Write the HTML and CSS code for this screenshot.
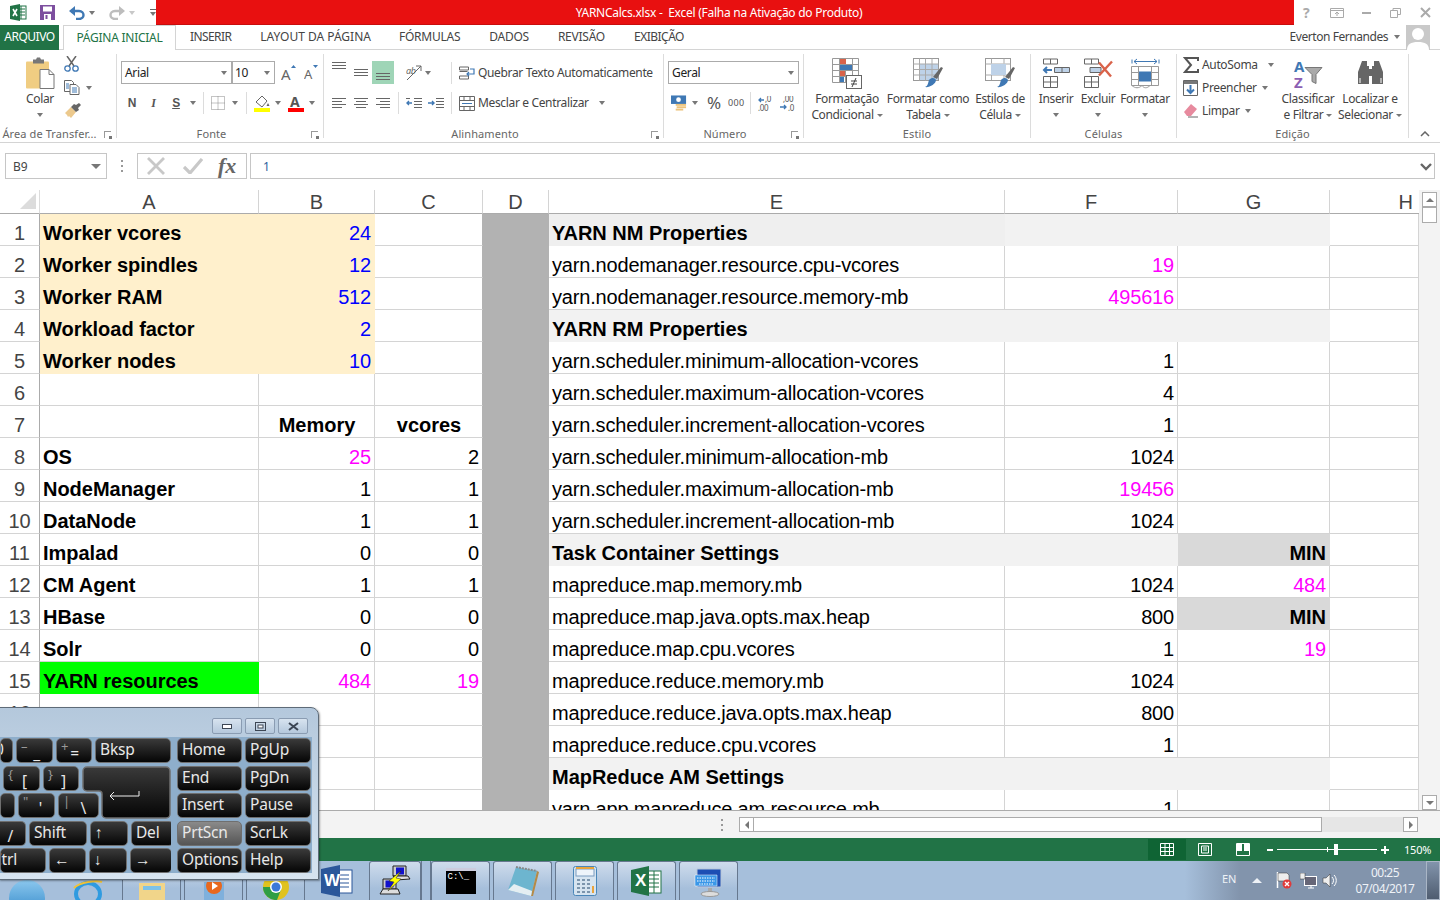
FILE: index.html
```html
<!DOCTYPE html>
<html lang="pt-BR">
<head>
<meta charset="utf-8">
<title>YARNCalcs.xlsx - Excel</title>
<link rel="stylesheet" href="styles.css">
</head>
<body>
<div class="app">
  <header class="titlebar">
    <div class="qat">
      <svg class="q-logo" width="17" height="17" viewBox="0 0 17 17"><rect x="6" y="2" width="10" height="13" fill="#fff" stroke="#217346"/><path d="M8 5h7M8 8h7M8 11h7M11 2v13" stroke="#217346"/><path d="M0 2l10-2v17L0 15z" fill="#217346"/><path d="M3 5l4 7M7 5l-4 7" stroke="#fff" stroke-width="1.6"/></svg>
      <svg class="q-save" width="15" height="15" viewBox="0 0 15 15"><path d="M0 0h15v15H0z" fill="#7d4f9f"/><rect x="3" y="1.5" width="9" height="5" fill="#fff"/><rect x="4" y="9" width="7" height="6" fill="#fff"/><rect x="5.5" y="10" width="2" height="4" fill="#7d4f9f"/></svg>
      <svg class="q-undo" width="16" height="14" viewBox="0 0 16 14"><path d="M2 5h8c3 0 4.500 2 4.500 4s-1.500 4-4.500 4H7" fill="none" stroke="#3f78b4" stroke-width="2.400"/><path d="M6 0v10L0 5z" fill="#3f78b4"/></svg>
      <i class="tri q-t1"></i>
      <svg class="q-redo" width="16" height="14" viewBox="0 0 16 14"><path d="M14 5H6C3 5 1.500 7 1.500 9S3 13 6 13h3" fill="none" stroke="#bdbdbd" stroke-width="2.400"/><path d="M10 0v10l6-5z" fill="#bdbdbd"/></svg>
      <i class="tri tri-light q-t2"></i>
      <span class="q-more"><b></b><i class="tri"></i></span>
    </div>
    <div class="redbar">YARNCalcs.xlsx -&nbsp; Excel (Falha na Ativação do Produto)</div>
    <div class="winctl">
      <span class="w-help">?</span>
      <svg width="14" height="10" viewBox="0 0 14 10"><path d="M.5.500h13v9H.5zM.5 2.500h13" fill="none" stroke="#aaa"/><path d="M7 8V4M5 6l2-2 2 2" fill="none" stroke="#aaa"/></svg>
      <svg width="9" height="3" viewBox="0 0 9 3"><rect width="9" height="2" y="1" fill="#aaa"/></svg>
      <svg width="11" height="10" viewBox="0 0 11 10"><path d="M.5 2.500h7v7h-7zM3 2.500V.5h7.500v6H8" fill="none" stroke="#aaa"/></svg>
      <svg width="11" height="11" viewBox="0 0 11 11"><path d="M1 1l9 9M10 1l-9 9" stroke="#aaa" stroke-width="2"/></svg>
    </div>
  </header>

  <nav class="tabs">
    <span class="tab-file">ARQUIVO</span>
    <span class="tab-home">PÁGINA INICIAL</span>
    <span class="tab t-ins">INSERIR</span>
    <span class="tab t-lay">LAYOUT DA PÁGINA</span>
    <span class="tab">FÓRMULAS</span>
    <span class="tab">DADOS</span>
    <span class="tab">REVISÃO</span>
    <span class="tab t-exi">EXIBIÇÃO</span>
    <span class="user">Everton Fernandes</span>
    <i class="tri user-tri"></i>
    <svg class="avatar" width="24" height="25" viewBox="0 0 24 25"><rect width="24" height="25" fill="#c9c9c9"/><circle cx="12" cy="9" r="6" fill="#fff"/><path d="M1 25c0-6 4-8 11-8s11 2 11 8z" fill="#fff"/></svg>
  </nav>

  <section class="ribbon">
    <div class="group g-clip">
      <div class="body">
        <div class="big w40">
          <svg class="ico" width="30" height="32" viewBox="0 0 30 32"><rect x="1" y="4" width="23" height="27" rx="1" fill="#f0cd82"/><path d="M8 4V2h3l1-2h3l1 2h3v4H8z" fill="#777"/><path d="M15 12h9l5 5v14H15z" fill="#fff" stroke="#777"/><path d="M24 12v5h5" fill="none" stroke="#777"/></svg>
          <span>Colar</span>
          <i class="tri tri-line"></i>
        </div>
        <div class="smalls">
          <svg width="16" height="16" viewBox="0 0 16 16"><path d="M3 0l7 10M12 0L5 10" stroke="#666" stroke-width="1.500"/><circle cx="3.500" cy="12.500" r="2.700" fill="none" stroke="#3f78b4" stroke-width="1.300"/><circle cx="11.500" cy="12.500" r="2.700" fill="none" stroke="#3f78b4" stroke-width="1.300"/></svg>
          <span class="sm-row"><svg width="16" height="15" viewBox="0 0 16 15"><path d="M.5.500h7l2 2v9H.5z" fill="#fff" stroke="#666"/><path d="M6 4.500h6l3 3v7H6z" fill="#fff" stroke="#666"/><path d="M2 4h3M2 6h3M2 8h3M8 8h5M8 10h5M8 12h5" stroke="#3f78b4"/></svg><i class="tri ml6"></i></span>
          <svg width="17" height="16" viewBox="0 0 17 16"><path d="M1 10l6-6 5 5-5 6-2-2-1 1-1-2z" fill="#ecc98d"/><path d="M7 4l3-3 2 1 3-2 2 2-3 3 1 2-3 2z" fill="#666"/></svg>
        </div>
      </div>
      <div class="label lbl-launch">Área de Transfer...<i class="launch"></i></div>
    </div>

    <div class="group g-font">
      <div class="body col">
        <div class="r1">
          <span class="sel w111">Arial<i class="tri"></i></span>
          <span class="sel w43 nol">10<i class="tri"></i></span>
          <svg class="ml6" width="15" height="16" viewBox="0 0 15 16"><text x="0" y="15" class="svg-a a-big">A</text><path d="M10 3l2.500-3L15 3z" fill="#3f78b4"/></svg>
          <svg class="ml8" width="14" height="15" viewBox="0 0 14 15"><text x="0" y="14" class="svg-a a-sm">A</text><path d="M9 0h5l-2.500 3z" fill="#3f78b4"/></svg>
        </div>
        <div class="r2">
          <span class="it w22 b-ico">N</span>
          <span class="it w21 i-ico">I</span>
          <span class="it w24 s-ico">S</span>
          <span class="it w9"><i class="tri"></i></span>
          <i class="sep m6-6"></i>
          <span class="it w16"><svg width="14" height="14" viewBox="0 0 14 14"><path d="M.5.500h13v13H.5zM7 .5v13M.5 7h13" fill="none" stroke="#888" stroke-dasharray="1 1"/></svg></span>
          <span class="it w18"><i class="tri"></i></span>
          <i class="sep m2-7"></i>
          <span class="it w16"><svg width="16" height="17" viewBox="0 0 16 17"><path d="M2 7l6-6 5 5-5 6z" fill="#fff" stroke="#666"/><path d="M14 8l1.500 3h-3z" fill="#666"/><rect y="13" width="16" height="4" fill="#ffff00"/></svg></span>
          <span class="it w16"><i class="tri"></i></span>
          <span class="it w20"><svg width="16" height="17" viewBox="0 0 16 17"><text x="2" y="12" class="svg-a a-col">A</text><rect y="13" width="16" height="4" fill="#ff0000"/></svg></span>
          <span class="it w12"><i class="tri"></i></span>
        </div>
      </div>
      <div class="label lbl-launch">Fonte<i class="launch"></i></div>
    </div>

    <div class="group g-align">
      <div class="body col">
        <div class="r1">
          <span class="it w14 mr8"><svg class="at-t" width="14" height="7" viewBox="0 0 14 7"><path d="M0 .5h14M0 3.500h14M0 6.500h14" stroke="#666"/></svg></span>
          <span class="it w14"><svg width="14" height="7" viewBox="0 0 14 7"><path d="M0 .5h14M0 3.500h14M0 6.500h14" stroke="#666"/></svg></span>
          <span class="it w22 on ml4"><svg width="14" height="7" viewBox="0 0 14 7"><path d="M0 .5h14M0 3.500h14M0 6.500h14" stroke="#666"/></svg></span>
          <span class="it w16 ml12"><svg width="16" height="16" viewBox="0 0 16 16"><path d="M1 15L15 1M10 1h5v5" fill="none" stroke="#666"/><text x="0" y="9" class="svg-ab">ab</text></svg></span>
          <span class="it w12"><i class="tri"></i></span>
          <i class="sep m17-7"></i>
          <svg width="16" height="14" viewBox="0 0 16 14"><path d="M.5 1h9v3h-9zM.5 10h9v3h-9z" fill="none" stroke="#666"/><path d="M.5 5.500h8" stroke="#666"/><path d="M11 3h4v5H8M10 6L8 8l2 2" fill="none" stroke="#3f78b4" stroke-width="1.200"/></svg>
          <span class="txt ml3">Quebrar Texto Automaticamente</span>
        </div>
        <div class="r2">
          <span class="it w14 mr8"><svg width="14" height="10" viewBox="0 0 14 10"><path d="M0 .5h14M0 3.500h10M0 6.500h14M0 9.500h10" stroke="#666"/></svg></span>
          <span class="it w14 mr8"><svg width="14" height="10" viewBox="0 0 14 10"><path d="M0 .5h14M2 3.500h10M0 6.500h14M2 9.500h10" stroke="#666"/></svg></span>
          <span class="it w14"><svg width="14" height="10" viewBox="0 0 14 10"><path d="M0 .5h14M4 3.500h10M0 6.500h14M4 9.500h10" stroke="#666"/></svg></span>
          <i class="sep m8-7"></i>
          <span class="it w16 mr6"><svg width="16" height="10" viewBox="0 0 16 10"><path d="M8 .5h8M8 3.500h8M8 6.500h8M8 9.500h8M0 .5h4" stroke="#666"/><path d="M6 5H1M3 3L1 5l2 2" fill="none" stroke="#3f78b4" stroke-width="1.400"/></svg></span>
          <span class="it w16"><svg width="16" height="10" viewBox="0 0 16 10"><path d="M8 .5h8M8 3.500h8M8 6.500h8M8 9.500h8" stroke="#666"/><path d="M0 5h6M4 3l2 2-2 2" fill="none" stroke="#3f78b4" stroke-width="1.400"/></svg></span>
          <i class="sep m7-7"></i>
          <svg width="16" height="15" viewBox="0 0 16 15"><path d="M.5.500h15v14H.5zM.5 4.500h15M.5 10.500h15M5 .5v4M5 10.500v4M11 .5v4M11 10.500v4" fill="none" stroke="#666"/><path d="M3 7.500h10" stroke="#3f78b4"/></svg>
          <span class="txt ml3">Mesclar e Centralizar</span>
          <i class="tri ml10"></i>
        </div>
      </div>
      <div class="label lbl-launch">Alinhamento<i class="launch"></i></div>
    </div>

    <div class="group g-num">
      <div class="body col">
        <div class="r1"><span class="sel w131">Geral<i class="tri"></i></span></div>
        <div class="r2">
          <span class="it w16 ml3"><svg width="17" height="16" viewBox="0 0 17 16"><rect y="0" width="16" height="9" fill="#3f78b4"/><circle cx="8" cy="4.500" r="2.500" fill="#fff"/><rect x="5" y="9" width="11" height="2" fill="#edc47c"/><rect x="6" y="11.500" width="10" height="2" fill="#edc47c"/><rect x="5" y="14" width="8" height="2" fill="#edc47c"/></svg></span>
          <span class="it w16"><i class="tri"></i></span>
          <span class="pct">%</span>
          <span class="th">000</span>
          <i class="sep m7-7"></i>
          <svg width="15" height="15" viewBox="0 0 15 15"><text x="7" y="6" class="svg-dec">,0</text><text x="0" y="15" class="svg-dec">,00</text><path d="M6 4H1M3 2L1 4l2 2" fill="none" stroke="#3f78b4" stroke-width="1.300"/></svg>
          <svg class="ml7" width="15" height="15" viewBox="0 0 15 15"><text x="3" y="6" class="svg-dec">,00</text><text x="8" y="15" class="svg-dec">,0</text><path d="M0 11h6M4 9l2 2-2 2" fill="none" stroke="#3f78b4" stroke-width="1.300"/></svg>
        </div>
      </div>
      <div class="label lbl-launch">Número<i class="launch"></i></div>
    </div>

    <div class="group g-style">
      <div class="body">
        <div class="big w80">
          <svg class="ico" width="30" height="31" viewBox="0 0 30 31"><path d="M.5.500h26v24H.5zM.5 6.500h26M.5 12.500h26M.5 18.500h26M7.500.5v24M13.500.5v24M20.500.5v24" fill="none" stroke="#999"/><rect x="8" y="1" width="6" height="5" fill="#d9634a"/><rect x="8" y="7" width="12" height="5" fill="#3f78b4"/><rect x="8" y="13" width="5" height="5" fill="#d9634a"/><rect x="8" y="19" width="4" height="5" fill="#3f78b4"/><rect x="14.500" y="17.500" width="15" height="13" fill="#fff" stroke="#666"/><path d="M19 23h6M19 26h6M24 20l-4 9" stroke="#444"/></svg>
          <span>Formatação</span><span class="dd">Condicional<i class="tri"></i></span>
        </div>
        <div class="big w82">
          <svg class="ico" width="30" height="31" viewBox="0 0 30 31"><rect x=".5" y=".5" width="25" height="22" fill="#fff" stroke="#999"/><rect x="6" y="6" width="19" height="16" fill="#bed2e8"/><path d="M.5 6h25M.5 11.500h25M.5 17h25M6.500.5v22M12.500.5v22M19 .5v22" fill="none" stroke="#aaa"/><path d="M20 19l8-10 2 1-6 11z" fill="#666"/><path d="M16 22c3-3 6-2 7 0 0 4-7 8-11 7 3-1 3-4 4-7z" fill="#3f78b4"/></svg>
          <span>Formatar como</span><span class="dd">Tabela<i class="tri"></i></span>
        </div>
        <div class="big w62">
          <svg class="ico" width="30" height="31" viewBox="0 0 30 31"><rect x=".5" y=".5" width="25" height="22" fill="#fff" stroke="#999"/><path d="M.5 6h25M.5 17h25M6.500 .5v5M6.500 17v5M19 .5v5M19 17v5" stroke="#aaa"/><rect x="6" y="6" width="15" height="11" fill="#bed2e8"/><path d="M20 19l8-10 2 1-6 11z" fill="#666"/><path d="M16 22c3-3 6-2 7 0 0 4-7 8-11 7 3-1 3-4 4-7z" fill="#3f78b4"/></svg>
          <span>Estilos de</span><span class="dd">Célula<i class="tri"></i></span>
        </div>
      </div>
      <div class="label">Estilo</div>
    </div>

    <div class="group g-cell">
      <div class="body">
        <div class="big w42">
          <svg class="ico" width="28" height="30" viewBox="0 0 28 30"><path d="M1.500.5h14v5h-14zM8.500 .5v5M1.500 18h14v11h-14zM1.500 23.500h14M8.500 18v11" fill="none" stroke="#666"/><path d="M12.500 9h15v5h-15zM20 9v5" fill="#bed2e8" stroke="#666"/><path d="M10 11.500H2M5 8.500l-3 3 3 3" fill="none" stroke="#3f78b4" stroke-width="2"/></svg>
          <span>Inserir</span><i class="tri tri-line"></i>
        </div>
        <div class="big w42">
          <svg class="ico" width="30" height="30" viewBox="0 0 30 30"><path d="M1.500.5h14v5h-14zM8.500 .5v5M1.500 18h14v11h-14zM1.500 23.500h14M8.500 18v11" fill="none" stroke="#666"/><path d="M7 9h11v5H7z" fill="#bed2e8" stroke="#666"/><path d="M16 4l12 14M29 3L16 17" stroke="#d9634a" stroke-width="2.400"/></svg>
          <span>Excluir</span><i class="tri tri-line"></i>
        </div>
        <div class="big w52">
          <svg class="ico" width="29" height="30" viewBox="0 0 29 30"><path d="M1 1v4M28 1v4" stroke="#3f78b4"/><path d="M3 3h23M6 .5L3 3l3 2.500M23 .5L26 3l-3 2.500" fill="none" stroke="#3f78b4"/><path d="M.5 8h27v19H.5zM.5 14h27M.5 21h27M7.500 8v19M20.500 8v19" fill="none" stroke="#999"/><rect x="8" y="13" width="12" height="10" fill="#3f78b4"/><path d="M1 27c3 3 7 3 10 0M11 27c2 3 5 3 8 0" fill="none" stroke="#999"/></svg>
          <span>Formatar</span><i class="tri tri-line"></i>
        </div>
      </div>
      <div class="label">Células</div>
    </div>

    <div class="group g-edit">
      <div class="body">
        <div class="edit-col">
          <div class="edit-row"><svg width="16" height="16" viewBox="0 0 16 16"><path d="M15 4V1H2l6 7-6 7h13v-3" fill="none" stroke="#555" stroke-width="2"/></svg><span class="txt ml3">AutoSoma</span><i class="tri ml10"></i></div>
          <div class="edit-row"><svg width="15" height="16" viewBox="0 0 15 16"><path d="M.5.500h14v15H.5z" fill="#fff" stroke="#666"/><rect x="1" y="1" width="13" height="3" fill="#777"/><path d="M7.500 5v8M4 9.500l3.500 3.500L11 9.500" fill="none" stroke="#3f78b4" stroke-width="2"/></svg><span class="txt ml4">Preencher</span><i class="tri ml5"></i></div>
          <div class="edit-row"><svg width="15" height="14" viewBox="0 0 15 14"><path d="M1 8l7-8 6 5-6 7H4z" fill="#e78a9e"/><path d="M5 13h10" stroke="#666"/></svg><span class="txt ml4">Limpar</span><i class="tri ml5"></i></div>
        </div>
        <div class="big w60">
          <svg class="ico" width="30" height="30" viewBox="0 0 30 30"><text x="1" y="13" class="svg-sort sort-a">A</text><text x="1" y="29" class="svg-sort sort-z">Z</text><path d="M12 9h17l-6 7v9l-4-2v-7z" fill="#aaa" stroke="#777"/></svg>
          <span>Classificar</span><span class="dd">e Filtrar<i class="tri"></i></span>
        </div>
        <div class="big w64">
          <svg class="ico" width="27" height="27" viewBox="0 0 27 27"><path d="M5 1h5v5h2v18H1V12zM22 1h-5v5h-2v18h11V12z" fill="#666"/><rect x="12" y="9" width="3" height="7" fill="#666"/><path d="M3 18v5M24 18v5" stroke="#fff"/></svg>
          <span>Localizar e</span><span class="dd">Selecionar<i class="tri"></i></span>
        </div>
      </div>
      <div class="label">Edição</div>
    </div>

    <svg class="collapse" width="10" height="6" viewBox="0 0 10 6"><path d="M1 5l4-4 4 4" fill="none" stroke="#666" stroke-width="1.500"/></svg>
  </section>

  <div class="fbar">
    <span class="namebox">B9<i class="tri tri-big"></i></span>
    <span class="fdots"><b></b><b></b><b></b></span>
    <span class="fxbox">
      <svg width="18" height="18" viewBox="0 0 18 18"><path d="M1 1l16 16M17 1L1 17" stroke="#c8c8c8" stroke-width="2.800"/></svg>
      <svg class="ml18" width="20" height="16" viewBox="0 0 20 16"><path d="M1 9l6 6L19 1" fill="none" stroke="#c8c8c8" stroke-width="3.200"/></svg>
      <span class="fx">fx</span>
    </span>
    <span class="finput">1<svg class="fchev" width="12" height="8" viewBox="0 0 12 8"><path d="M1 1l5 5 5-5" fill="none" stroke="#666" stroke-width="2.400"/></svg></span>
  </div>

  <main class="sheetwrap">
    <div class="sheet">
      <div class="corner"><i></i></div><div class="ch">A</div><div class="ch">B</div><div class="ch">C</div><div class="ch">D</div><div class="ch">E</div><div class="ch">F</div><div class="ch">G</div><div class="ch ch-h">H</div>

      <div class="rh">1</div><div class="c b y ny">Worker vcores</div><div class="c r u y">24</div><div class="c"></div><div class="c d"></div><div class="c b g1">YARN NM Properties</div><div class="c g"></div><div class="c g"></div><div class="c"></div>
      <div class="rh">2</div><div class="c b y ny">Worker spindles</div><div class="c r u y">12</div><div class="c"></div><div class="c d"></div><div class="c">yarn.nodemanager.resource.cpu-vcores</div><div class="c r m">19</div><div class="c"></div><div class="c"></div>
      <div class="rh">3</div><div class="c b y ny">Worker RAM</div><div class="c r u y">512</div><div class="c"></div><div class="c d"></div><div class="c">yarn.nodemanager.resource.memory-mb</div><div class="c r m">495616</div><div class="c"></div><div class="c"></div>
      <div class="rh">4</div><div class="c b y ny">Workload factor</div><div class="c r u y">2</div><div class="c"></div><div class="c d"></div><div class="c b g">YARN RM Properties</div><div class="c g"></div><div class="c g"></div><div class="c"></div>
      <div class="rh">5</div><div class="c b y ny">Worker nodes</div><div class="c r u y">10</div><div class="c"></div><div class="c d"></div><div class="c">yarn.scheduler.minimum-allocation-vcores</div><div class="c r">1</div><div class="c"></div><div class="c"></div>
      <div class="rh">6</div><div class="c"></div><div class="c"></div><div class="c"></div><div class="c d"></div><div class="c">yarn.scheduler.maximum-allocation-vcores</div><div class="c r">4</div><div class="c"></div><div class="c"></div>
      <div class="rh">7</div><div class="c"></div><div class="c b mid">Memory</div><div class="c b mid">vcores</div><div class="c d"></div><div class="c">yarn.scheduler.increment-allocation-vcores</div><div class="c r">1</div><div class="c"></div><div class="c"></div>
      <div class="rh">8</div><div class="c b">OS</div><div class="c r m">25</div><div class="c r">2</div><div class="c d"></div><div class="c">yarn.scheduler.minimum-allocation-mb</div><div class="c r">1024</div><div class="c"></div><div class="c"></div>
      <div class="rh">9</div><div class="c b">NodeManager</div><div class="c r">1</div><div class="c r">1</div><div class="c d"></div><div class="c">yarn.scheduler.maximum-allocation-mb</div><div class="c r m">19456</div><div class="c"></div><div class="c"></div>
      <div class="rh">10</div><div class="c b">DataNode</div><div class="c r">1</div><div class="c r">1</div><div class="c d"></div><div class="c">yarn.scheduler.increment-allocation-mb</div><div class="c r">1024</div><div class="c"></div><div class="c"></div>
      <div class="rh">11</div><div class="c b">Impalad</div><div class="c r">0</div><div class="c r">0</div><div class="c d"></div><div class="c b g">Task Container Settings</div><div class="c g"></div><div class="c r b s">MIN</div><div class="c"></div>
      <div class="rh">12</div><div class="c b">CM Agent</div><div class="c r">1</div><div class="c r">1</div><div class="c d"></div><div class="c">mapreduce.map.memory.mb</div><div class="c r">1024</div><div class="c r m">484</div><div class="c"></div>
      <div class="rh">13</div><div class="c b">HBase</div><div class="c r">0</div><div class="c r">0</div><div class="c d"></div><div class="c">mapreduce.map.java.opts.max.heap</div><div class="c r">800</div><div class="c r b s">MIN</div><div class="c"></div>
      <div class="rh">14</div><div class="c b">Solr</div><div class="c r">0</div><div class="c r">0</div><div class="c d"></div><div class="c">mapreduce.map.cpu.vcores</div><div class="c r">1</div><div class="c r m">19</div><div class="c"></div>
      <div class="rh">15</div><div class="c b lime">YARN resources</div><div class="c r m">484</div><div class="c r m">19</div><div class="c d"></div><div class="c">mapreduce.reduce.memory.mb</div><div class="c r">1024</div><div class="c"></div><div class="c"></div>
      <div class="rh">16</div><div class="c"></div><div class="c"></div><div class="c"></div><div class="c d"></div><div class="c">mapreduce.reduce.java.opts.max.heap</div><div class="c r">800</div><div class="c"></div><div class="c"></div>
      <div class="rh"></div><div class="c"></div><div class="c"></div><div class="c"></div><div class="c d"></div><div class="c">mapreduce.reduce.cpu.vcores</div><div class="c r">1</div><div class="c"></div><div class="c"></div>
      <div class="rh"></div><div class="c"></div><div class="c"></div><div class="c"></div><div class="c d"></div><div class="c b g">MapReduce AM Settings</div><div class="c g"></div><div class="c g"></div><div class="c"></div>
      <div class="rh"></div><div class="c"></div><div class="c"></div><div class="c"></div><div class="c d"></div><div class="c">yarn.app.mapreduce.am.resource.mb</div><div class="c r">1</div><div class="c"></div><div class="c"></div>
    </div>
    <div class="vscroll">
      <span class="sbtn"><i class="up"></i></span>
      <span class="thumb"></span>
      <span class="vtrack"></span>
      <span class="sbtn"><i class="down"></i></span>
    </div>
  </main>

  <div class="hbar">
    <span class="hdots"><b></b><b></b><b></b></span>
    <div class="hscroll">
      <span class="hbtn"><i class="left"></i></span>
      <span class="hthumb"></span>
      <span class="htrack"></span>
      <span class="hbtn"><i class="right"></i></span>
    </div>
  </div>

  <footer class="status">
    <span class="view view-on"><svg width="14" height="13" viewBox="0 0 14 13"><path d="M.5.500h13v12H.5zM.5 4.500h13M.5 8.500h13M5 .5v12M9.500 .5v12" fill="none" stroke="#fff"/></svg></span>
    <span class="view"><svg width="14" height="13" viewBox="0 0 14 13"><path d="M.5.500h13v12H.5z" fill="none" stroke="#fff"/><path d="M3.500 3h7v7h-7zM5 5h4M5 7h4" fill="none" stroke="#fff"/></svg></span>
    <span class="view"><svg width="14" height="13" viewBox="0 0 14 13"><path d="M.5.500h13v12H.5z" fill="none" stroke="#fff"/><path d="M1 1h5v7H1zM8 1h5v7H8z" fill="#fff"/></svg></span>
    <span class="zminus"></span>
    <span class="zslider"><i class="ztick"></i><i class="zthumb"></i></span>
    <span class="zplus"></span>
    <span class="zpct">150%</span>
  </footer>

  <div class="taskbar">
    <span class="orb"></span>
    <svg class="ie" width="32" height="20" viewBox="0 0 32 20"><ellipse cx="16" cy="14" rx="12" ry="11" fill="none" stroke="#2f9be0" stroke-width="4"/><path d="M2 8c6-6 22-8 28-6" fill="none" stroke="#f0c23a" stroke-width="2"/></svg>
    <span class="tb tb-explorer"><svg width="30" height="18" viewBox="0 0 30 18"><rect x="2" y="1" width="26" height="17" fill="#f1d58a"/><rect x="6" y="4" width="18" height="4" fill="#7ec2e8"/></svg></span>
    <span class="tb tb-media"><svg width="26" height="18" viewBox="0 0 26 18"><rect x="3" y="0" width="20" height="18" fill="#7fb0dc"/><circle cx="13" cy="4" r="8" fill="#e8681e"/><path d="M11 0l6 4-6 4z" fill="#fff"/></svg></span>
    <span class="tb tb-chrome"><svg width="30" height="19" viewBox="0 0 30 19"><circle cx="15" cy="6" r="13" fill="#e0c21f"/><path d="M2 6a13 13 0 0 0 14 13L21 6z" fill="#2f9e44"/><circle cx="15" cy="6" r="6" fill="#fff"/><circle cx="15" cy="6" r="4.500" fill="#3b78d8"/></svg></span>
    <span class="tb-plain"><svg width="32" height="32" viewBox="0 0 32 32"><rect x="13" y="5" width="18" height="23" fill="#fff" stroke="#2b579a"/><path d="M17 10h11M17 14h11M17 18h11M17 22h11" stroke="#2b579a"/><path d="M0 4l19-4v32L0 28z" fill="#2b579a"/><text x="3" y="21" class="svg-w">W</text></svg></span>
    <span class="tb tb-putty"><svg width="32" height="32" viewBox="0 0 32 32"><path d="M14 1h13v10H14z" fill="#ccc" stroke="#222"/><rect x="17" y="2.500" width="8" height="7" fill="#1111cc"/><path d="M14 11h15l2 3-14 1z" fill="#ddd" stroke="#222"/><path d="M4 14h13v10H4z" fill="#ccc" stroke="#222"/><rect x="6.500" y="15.500" width="8" height="7" fill="#1111cc"/><path d="M1 29l3-5h15l2 5z" fill="#ddd" stroke="#222"/><path d="M22 6L10 16l5 1-6 9 13-12-5-1z" fill="#ffff00" stroke="#222" stroke-width=".5"/></svg></span>
    <span class="tb-div"></span>
    <span class="tb tb-cmd"><span class="cmd">C:\_</span></span>
    <span class="tb"><svg width="32" height="30" viewBox="0 0 32 30"><path d="M9 1l21 4-6 25L1 24z" fill="#6db5cf"/><path d="M24 30l6-25 2 1-6 24z" fill="#b58a45"/><path d="M9 1l21 4" stroke="#888" stroke-width="2" stroke-dasharray="2 1"/><path d="M1 24l23 6 1-5-18-7z" fill="#e4eef2"/></svg></span>
    <span class="tb"><svg width="24" height="30" viewBox="0 0 24 30"><rect x=".5" y=".5" width="23" height="29" rx="2" fill="#d6e4f0" stroke="#4a86b8"/><rect x="3" y="3" width="18" height="7" fill="#eef4fa" stroke="#7a9cc0"/><rect x="3" y="1" width="18" height="2" fill="#e9a43d"/><path d="M4 14h3M9 14h3M14 14h3M4 18h3M9 18h3M14 18h3M4 22h3M9 22h3M14 22h3M4 26h3M9 26h3M14 26h3" stroke="#7c95ad" stroke-width="2"/><path d="M20 20v7" stroke="#e9a43d" stroke-width="2"/></svg></span>
    <span class="tb"><svg width="31" height="30" viewBox="0 0 31 30"><rect x="15" y="5" width="15" height="22" fill="#fff" stroke="#217346"/><path d="M18 9h10M18 13h10M18 17h10M18 21h10M23 5v22" stroke="#217346"/><path d="M0 4l18-4v30L0 26z" fill="#217346"/><text x="4" y="20" class="svg-w">X</text></svg></span>
    <span class="tb"><svg width="32" height="31" viewBox="0 0 32 31"><path d="M4 3h24v18H4z" fill="#1d4fb4" stroke="#b8c6d8"/><path d="M2 9h22v11H2z" fill="#3a97e8" stroke="#fff" stroke-width=".5"/><path d="M4 12h18M4 15h18M6 18h14" stroke="#fff" stroke-dasharray="1.500 1"/><path d="M15 22h4v4h-4z" fill="#aaa"/><ellipse cx="17" cy="28" rx="9" ry="2.500" fill="#ddd" stroke="#999"/></svg></span>
    <div class="tray">
      <span class="lang">EN</span>
      <i class="tray-up"></i>
      <svg width="17" height="17" viewBox="0 0 17 17"><path d="M2.500 0v16" stroke="#fff" stroke-width="1.500"/><path d="M3 1h9l2 2v6H3z" fill="#eee" stroke="#333" stroke-width=".5"/><circle cx="12" cy="12" r="4.500" fill="#e03a3a"/><path d="M10 10l4 4M14 10l-4 4" stroke="#fff" stroke-width="1.400"/></svg>
      <svg width="17" height="16" viewBox="0 0 17 16"><rect x="4.500" y="3.500" width="12" height="9" fill="#667" stroke="#fff"/><path d="M8 15h6M11 13v2" stroke="#fff"/><rect x="0" y="0" width="5" height="6" fill="#eee" stroke="#333" stroke-width=".5"/></svg>
      <svg width="16" height="15" viewBox="0 0 16 15"><path d="M1 5h3l4-4v13l-4-4H1z" fill="#eee" stroke="#333" stroke-width=".5"/><path d="M10 4c2 2 2 5 0 7M12 2c3 3 3 8 0 11" fill="none" stroke="#fff"/></svg>
      <div class="clock"><span>00:25</span><span>07/04/2017</span></div>
      <span class="showdesk"></span>
    </div>
  </div>

  <aside class="osk">
    <div class="osk-ctl">
      <span class="oc"><svg width="10" height="5" viewBox="0 0 10 5"><rect x=".5" y=".5" width="9" height="4" fill="#fff" stroke="#3c4654"/></svg></span>
      <span class="oc"><svg width="11" height="9" viewBox="0 0 11 9"><rect x=".5" y=".5" width="10" height="8" fill="none" stroke="#3c4654"/><rect x="3" y="3" width="5" height="3" fill="#fff" stroke="#3c4654"/></svg></span>
      <span class="oc"><svg width="11" height="9" viewBox="0 0 11 9"><path d="M1 1l9 7M10 1L1 8" stroke="#3c4654" stroke-width="2"/></svg></span>
    </div>
    <div class="osk-keys">
      <div class="osk-left">
        <div class="krow"><span class="k k-off1"><em></em>0</span><span class="k k37"><em>–</em><u>_</u></span><span class="k k36"><em>+</em><u>=</u></span><span class="k k76 kt">Bksp</span></div>
        <div class="krow kr2"><span class="k k37"><em>{</em><u>[</u></span><span class="k k36"><em>}</em><u>]</u></span></div>
        <div class="krow"><span class="k k-off4"></span><span class="k k37"><em>"</em><u>'</u></span><span class="k k41"><em>|</em><u>\</u></span></div>
        <div class="krow kr4"><span class="k k-off2 k-end"><u>/</u></span><span class="k k58 kt">Shift</span><span class="k k38 kt">↑</span><span class="k k43 kt">Del</span></div>
        <div class="krow kr5"><span class="k k-off3 kt">Ctrl</span><span class="k k37 kt">←</span><span class="k k38 kt">↓</span><span class="k k42 kt">→</span></div>
        <svg class="enter" width="89" height="53" viewBox="0 0 89 53"><defs><linearGradient id="eg" x1="0" y1="0" x2="0" y2="1"><stop offset="0" stop-color="#3a3a3a"/><stop offset="1" stop-color="#050505"/></linearGradient></defs><path d="M5 1h79a4 4 0 0 1 4 4v43a4 4 0 0 1-4 4H24a4 4 0 0 1-4-4V28a3 3 0 0 0-3-3H5a4 4 0 0 1-4-4V5a4 4 0 0 1 4-4z" fill="url(#eg)" stroke="#6f6f6f" stroke-width="1.500"/><path d="M57 25v5H28M32 26l-4 4 4 4" fill="none" stroke="#eee"/></svg>
      </div>
      <div class="osk-right">
        <span class="k kt">Home</span><span class="k kt">PgUp</span>
        <span class="k kt">End</span><span class="k kt">PgDn</span>
        <span class="k kt">Insert</span><span class="k kt">Pause</span>
        <span class="k kt k-lit">PrtScn</span><span class="k kt">ScrLk</span>
        <span class="k kt">Options</span><span class="k kt">Help</span>
      </div>
    </div>
  </aside>
</div>
</body>
</html>
```
FILE: styles.css
```css
* { box-sizing: border-box; }
html, body { margin: 0; padding: 0; height: 100%; overflow: hidden; }
body { background: #fff; font: 12px/16px "Noto Sans", sans-serif; color: #444; }
i, em, u { font-style: normal; text-decoration: none; }
.app { position: relative; width: 1440px; height: 900px; display: flex; flex-direction: column; overflow: hidden; }

.tri { display: inline-block; width: 0; height: 0; border-left: 3.500px solid transparent; border-right: 3.500px solid transparent; border-top: 4px solid #777; flex: none; }
.tri-light { border-top-color: #c8c8c8; }
.tri-big { border-left-width: 5px; border-right-width: 5px; border-top-width: 5px; }
.ml3 { margin-left: 3px; } .ml4 { margin-left: 4px; } .ml5 { margin-left: 5px; } .ml6 { margin-left: 6px; } .ml7 { margin-left: 7px; } .ml8 { margin-left: 8px; } .ml10 { margin-left: 10px; } .ml12 { margin-left: 12px; } .ml18 { margin-left: 18px; }
.mr6 { margin-right: 6px; } .mr8 { margin-right: 8px; }

/* title bar */
.titlebar { height: 25px; display: flex; flex: none; }
.qat { width: 156px; display: flex; align-items: center; flex: none; padding-left: 10px; }
.q-save { margin-left: 13px; } .q-undo { margin-left: 14px; } .q-t1 { margin-left: 4px; } .q-redo { margin-left: 14px; } .q-t2 { margin-left: 4px; }
.q-more { margin-left: 15px; display: flex; flex-direction: column; align-items: center; gap: 2px; }
.q-more b { width: 6px; height: 1px; background: #666; }
.redbar { width: 1138px; height: 25px; flex: none; background: #e81010; border-bottom: 1px solid #c80d0d; color: #fff; text-align: center; line-height: 25px; padding-right: 12px; letter-spacing: -.26px; white-space: nowrap; }
.winctl { flex: 1; display: flex; align-items: center; padding-left: 9px; }
.winctl svg { flex: none; }
.w-help { width: 10px; color: #aaa; font: bold 14px "Noto Sans", sans-serif; margin-right: 17px; }
.winctl svg:nth-child(3) { margin-left: 18px; }
.winctl svg:nth-child(4) { margin-left: 19px; }
.winctl svg:nth-child(5) { margin-left: 19px; }

/* tabs */
.tabs { height: 25px; display: flex; align-items: center; flex: none; border-bottom: 1px solid #d4d4d4; position: relative; letter-spacing: -.25px; }
.tab-file { width: 59px; height: 25px; margin-right: 4px; background: #217346; color: #fff; text-align: center; line-height: 24px; letter-spacing: -.5px; }
.tab-home { width: 113px; height: 25px; margin-right: 14px; background: #fff; border: 1px solid #d4d4d4; border-bottom: 0; color: #217346; text-align: center; line-height: 23px; }
.tab { margin-right: 29px; white-space: nowrap; }
.t-ins { letter-spacing: -.6px; }
.t-lay { letter-spacing: 0; margin-right: 28px; }
.t-exi { letter-spacing: -.5px; }
.user { margin-left: auto; white-space: nowrap; letter-spacing: -.45px; }
.user-tri { margin: 0 6px 0 6px; }
.avatar { margin-right: 10px; flex: none; }

/* ribbon */
.ribbon { height: 93px; flex: none; padding-top: 4px; display: flex; border-bottom: 1px solid #d4d4d4; position: relative; letter-spacing: -.35px; }
.group { height: 84px; border-right: 1px solid #dcdcdc; display: flex; flex-direction: column; flex: none; position: relative; }
.g-clip { width: 117px; } .g-font { width: 207px; } .g-align { width: 340px; } .g-num { width: 140px; } .g-style { width: 227px; } .g-cell { width: 146px; } .g-edit { width: 232px; }
.body { height: 73px; display: flex; flex: none; }
.col { flex-direction: column; padding-top: 7px; }
.label { flex: 1; text-align: center; color: #666; font-size: 11px; line-height: 13px; letter-spacing: .1px; white-space: nowrap; }
.lbl-launch { padding-right: 17px; }
.launch { position: absolute; right: 5px; bottom: 0; width: 7px; height: 7px; border-left: 1px solid #999; border-top: 1px solid #999; }
.launch::after { content: ""; position: absolute; right: -1px; bottom: -1px; width: 3px; height: 3px; background: #777; }
.r1 { height: 23px; display: flex; align-items: center; flex: none; white-space: nowrap; }
.r2 { height: 22px; margin-top: 8px; display: flex; align-items: center; flex: none; white-space: nowrap; }
.it { display: inline-flex; align-items: center; justify-content: center; height: 22px; flex: none; }
.w9 { width: 9px; } .w12 { width: 12px; } .w14 { width: 14px; } .w16 { width: 16px; } .w18 { width: 18px; } .w20 { width: 20px; } .w21 { width: 21px; } .w22 { width: 22px; } .w24 { width: 24px; }
.sep { width: 1px; height: 22px; background: #dcdcdc; flex: none; }
.m6-6 { margin: 0 6px; } .m2-7 { margin: 0 7px 0 2px; } .m17-7 { margin: 0 7px 0 17px; } .m8-7 { margin: 0 7px 0 8px; } .m7-7 { margin: 0 7px; }
.txt { white-space: nowrap; }
.at-t { margin-bottom: 14px; }

.big { display: flex; flex-direction: column; align-items: center; flex: none; white-space: nowrap; line-height: 16px; }
.big .ico { height: 33px; margin: 3px 0 1px; flex: none; }
.big > span { height: 16px; }
.big .tri-line { margin-top: 6px; }
.dd { display: inline-flex; align-items: center; }
.dd .tri { margin-left: 3px; border-left-width: 3px; border-right-width: 3px; border-top-width: 3px; }
.w40 { width: 40px; } .w42 { width: 42px; } .w52 { width: 52px; } .w60 { width: 60px; } .w62 { width: 62px; } .w64 { width: 64px; } .w80 { width: 80px; } .w82 { width: 82px; }

.g-clip .body { padding-left: 20px; }
.smalls { margin-left: 4px; display: flex; flex-direction: column; gap: 8px; padding-top: 2px; align-items: flex-start; }
.sm-row { display: flex; align-items: center; }

.g-font .body { padding-left: 4px; }
.sel { height: 23px; display: flex; align-items: center; justify-content: space-between; border: 1px solid #ababab; padding: 0 4px 0 3px; color: #222; flex: none; }
.w111 { width: 111px; } .w43 { width: 43px; } .w131 { width: 131px; }
.nol { padding-left: 2px; }
.b-ico { font: bold 12px "Liberation Sans", sans-serif; color: #555; }
.i-ico { font: italic bold 12px "Liberation Serif", serif; color: #555; }
.s-ico { font: bold 12px "Liberation Sans", sans-serif; color: #555; text-decoration: underline; }
.svg-a { font-family: "Noto Sans", sans-serif; fill: #666; }
.a-big { font-size: 15px; } .a-sm { font-size: 13px; } .a-col { font-size: 14px; font-weight: 700; fill: #555; }
.svg-ab { font: italic 9px "Noto Sans", sans-serif; fill: #666; }

.g-align .body { padding-left: 8px; }
.on { background: #9fd5b7; height: 23px; align-items: flex-end; padding-bottom: 4px; }
.g-num .body { padding-left: 4px; }
.pct { margin-left: 4px; font-size: 17px; line-height: 22px; color: #555; width: 21px; flex: none; }
.th { font-size: 9px; color: #555; width: 15px; letter-spacing: .3px; flex: none; }
.svg-dec { font: 8px "Noto Sans", sans-serif; fill: #555; }

.g-style .body { padding-left: 3px; }
.g-cell .body { padding-left: 4px; }
.g-edit .body { padding-left: 6px; }
.edit-col { width: 95px; flex: none; display: flex; flex-direction: column; gap: 6.400px; padding-top: 2px; }
.edit-row { display: flex; align-items: center; height: 17px; white-space: nowrap; }
.svg-sort { font: bold 15px "Noto Sans", sans-serif; }
.sort-a { fill: #3f78b4; } .sort-z { fill: #8c5fb3; }
.collapse { position: absolute; right: 10px; bottom: 5px; }

/* formula bar */
.fbar { height: 26px; margin: 10px 0 11px; padding: 0 5px; display: flex; flex: none; color: #222; line-height: 26px; }
.namebox { width: 102px; border: 1px solid #c6c6c6; display: flex; align-items: center; justify-content: space-between; padding: 1px 5px 0 7px; flex: none; font-size: 12px; color: #444; }
.namebox .tri { border-top-color: #777; }
.fdots { width: 30px; display: flex; flex-direction: column; align-items: center; justify-content: center; gap: 3px; flex: none; }
.fdots b, .hdots b { width: 2px; height: 2px; background: #999; }
.fxbox { width: 110px; border: 1px solid #c6c6c6; display: flex; align-items: center; padding-left: 9px; flex: none; }
.fx { margin-left: 15px; font: italic bold 22px/22px "Liberation Serif", serif; color: #666; }
.finput { flex: 1; margin-left: 3px; border: 1px solid #c6c6c6; display: flex; align-items: center; justify-content: space-between; padding: 1px 2px 0 12px; color: #2b5f9e; }

/* sheet */
.sheetwrap { height: 620px; display: flex; flex: none; overflow: hidden; }
.sheet { width: 1419px; height: 620px; overflow: hidden; display: grid; grid-template-columns: 40px 219px 116px 108px 66px 456px 173px 152px 89px; grid-auto-rows: 32px; grid-template-rows: 24px; align-content: start; font: 20px/23px "Liberation Sans", sans-serif; color: #000; }
.corner { border-bottom: 1px solid #ababab; border-right: 1px solid #dcdcdc; padding: 3px 3px 3px 20px; }
.corner i { display: block; width: 0; height: 0; border-left: 16px solid transparent; border-bottom: 16px solid #dcdcdc; }
.ch { border-bottom: 1px solid #ababab; border-right: 1px solid #d4d4d4; text-align: center; color: #444; line-height: 25px; }
.ch-h { border-right: 0; text-align: right; padding-right: 6px; }
.rh { border-bottom: 1px solid #d4d4d4; border-right: 1px solid #ababab; text-align: center; color: #444; line-height: 39px; }
.c { border-bottom: 1px solid #d4d4d4; border-right: 1px solid #d4d4d4; padding: 8px 3px 0 3px; white-space: nowrap; overflow: hidden; letter-spacing: -.18px; }
.c:nth-child(9n+4) { border-right-color: #b2b2b2; }
.b { font-weight: 700; letter-spacing: -.02px; }
.r { text-align: right; }
.mid { text-align: center; padding-left: 1px; padding-right: 0; }
.u { color: #0000ff; } .m { color: #ff00ff; }
.y { background: #fff0cc; border-color: #fff0cc; }
.ny { border-right-color: #fff0cc; }
.d { background: #b2b2b2; border-color: #b2b2b2; }
.g { background: #f2f2f2; border-color: #f2f2f2; }
.g1 { background: #efefef; border-color: #efefef; }
.s { background: #d9d9d9; border-color: #d9d9d9; }
.lime { background: #00ff00; border-color: #00ff00; }
.vscroll { flex: 1; display: flex; flex-direction: column; padding: 2px 3px 0; background: #f3f3f3; }
.sbtn { height: 15px; background: #fff; border: 1px solid #ababab; display: flex; align-items: center; justify-content: center; flex: none; }
.up { border-left: 4px solid transparent; border-right: 4px solid transparent; border-bottom: 4px solid #777; }
.down { border-left: 4px solid transparent; border-right: 4px solid transparent; border-top: 4px solid #777; }
.thumb { height: 16px; background: #fff; border: 1px solid #ababab; flex: none; }
.vtrack { flex: 1; }

.hbar { height: 28px; background: #f3f3f3; border-top: 1px solid #ababab; display: flex; align-items: center; padding-left: 721px; flex: none; }
.hdots { width: 18px; display: flex; flex-direction: column; gap: 3px; }
.hscroll { width: 679px; height: 15px; display: flex; background: #e6e6e6; }
.hbtn { width: 15px; background: #fff; border: 1px solid #ababab; display: flex; align-items: center; justify-content: center; flex: none; }
.left { border-top: 4px solid transparent; border-bottom: 4px solid transparent; border-right: 4px solid #777; }
.right { border-top: 4px solid transparent; border-bottom: 4px solid transparent; border-left: 4px solid #777; }
.hthumb { width: 568px; background: #fff; border: 1px solid #ababab; border-left: 0; flex: none; }
.htrack { flex: 1; }

/* status */
.status { height: 23px; background: #217346; display: flex; align-items: center; padding-left: 1148px; flex: none; color: #fff; }
.view { width: 38px; height: 21px; display: flex; align-items: center; justify-content: center; flex: none; }
.view-on { background: #0f6434; }
.zminus { width: 6px; height: 2px; background: #fff; margin-left: 5px; flex: none; }
.zslider { width: 100px; height: 1px; background: #fff; margin-left: 4px; position: relative; flex: none; }
.ztick { position: absolute; left: 50px; top: -2px; width: 1px; height: 5px; background: #fff; }
.zthumb { position: absolute; left: 57px; top: -5px; width: 4px; height: 11px; background: #fff; }
.zplus { width: 8px; height: 8px; margin-left: 4px; flex: none; background: linear-gradient(#fff, #fff) center/8px 2px no-repeat, linear-gradient(#fff, #fff) center/2px 8px no-repeat; }
.zpct { margin-left: 15px; font-size: 11px; letter-spacing: -.2px; }

/* taskbar */
.taskbar { height: 39px; flex: none; background: linear-gradient(90deg, #a6bfdb 0, #a6bfdb 1185px, #8294ac 1240px, #8294ac 100%); display: flex; align-items: stretch; position: relative; overflow: hidden; }
.orb { width: 36px; height: 36px; margin: 19px 0 0 9px; border-radius: 50%; background: linear-gradient(#8cc8ee, #2f86c8); flex: none; }
.ie { margin: 19px 0 0 27px; flex: none; }
.tb { width: 59px; height: 39px; margin-right: 3px; background: linear-gradient(#cfdcec, #a6bfdb 70%); border: 1px solid #66788f; border-bottom: 0; border-radius: 3px 3px 0 0; display: flex; align-items: center; justify-content: center; flex: none; }
.tb-explorer { margin-left: 18px; padding-top: 19px; }
.tb-media { padding-top: 19px; }
.tb-chrome { padding-top: 19px; }
.tb-plain { width: 64px; display: flex; align-items: center; justify-content: center; flex: none; margin-left: -3px; }
.tb-putty { width: 52px; }
.tb-div { width: 10px; flex: none; margin-left: -3px; border-left: 1px solid #66788f; border-right: 1px solid #66788f; }
.cmd { width: 30px; height: 26px; background: #000; border-top: 3px solid #ccd; color: #fff; font: 9px/12px "Liberation Mono", monospace; padding-left: 2px; }
.svg-w { font: bold 17px "Liberation Sans", sans-serif; fill: #fff; }
.tray { margin-left: auto; display: flex; align-items: center; color: #eef2f7; flex: none; width: 220px; }
.tray svg { flex: none; }
.lang { width: 16px; margin-right: 14px; font-size: 11px; position: relative; top: -2px; margin-left: 2px; }
.tray-up { border-left: 5px solid transparent; border-right: 5px solid transparent; border-bottom: 5px solid #eef2f7; margin-right: 13px; flex: none; }
.tray svg:nth-of-type(2) { margin: 0 5px 0 8px; }
.clock { width: 80px; margin-left: 7px; display: flex; flex-direction: column; align-items: center; font-size: 12px; line-height: 16px; letter-spacing: -.5px; flex: none; }
.showdesk { width: 14px; height: 39px; background: linear-gradient(#8294ac, #4f5d70); border: 1px solid #aab6c6; margin-left: 1px; flex: none; }

/* on-screen keyboard window */
.osk { position: absolute; left: -1px; top: 707px; width: 320px; height: 173px; background: linear-gradient(#b4c8dc, #d6e3ef); border: 1px solid #5e6b78; border-radius: 0 8px 0 0; padding-top: 10px; box-shadow: 1px 1px 2px rgba(0,0,0,.35); }
.osk-ctl { height: 16px; margin-left: 212px; display: flex; gap: 3px; }
.oc { width: 30px; height: 16px; border: 1px solid #8a9cb2; border-radius: 2px; background: linear-gradient(#d7e3ef, #b5c8dc); display: flex; align-items: center; justify-content: center; }
.osk-keys { margin-top: 3px; width: 312px; height: 136px; background: #8eaecb; display: flex; padding-top: 1px; }
.osk-left { width: 171px; height: 135px; position: relative; display: grid; grid-template-rows: repeat(5, 25px); row-gap: 2.500px; overflow: hidden; flex: none; }
.osk-right { width: 135px; margin-left: 6px; display: grid; grid-template-columns: 65px 66px; grid-template-rows: repeat(5, 25px); gap: 2.500px 3px; flex: none; }
.krow { display: flex; gap: 3px; align-items: stretch; }
.kr2 { padding-left: 3px; }
.k { border: 1px solid #6f6f6f; border-radius: 5px; background: linear-gradient(#3a3a3a, #050505); color: #e8e8e8; display: flex; justify-content: space-between; font: 15.500px/20px "Noto Sans", sans-serif; letter-spacing: -.2px; flex: none; overflow: hidden; padding: 0 4px; white-space: nowrap; }
.kt { padding: 0 4px; }
.k em { color: #999; font-size: 13px; line-height: 14px; }
.k u { align-self: flex-end; margin-right: 8px; line-height: 18px; }
.k-lit { background: linear-gradient(#8a8a8a, #555); }
.k-off1 { width: 13px; justify-content: flex-start; padding: 0; text-indent: -6px; }
.k-off2 { width: 26px; }
.k-off3 { width: 46px; padding-left: 0; text-indent: -9px; }
.k-off4 { width: 15px; }
.k-end { justify-content: flex-end; border-left: 0; border-radius: 0 5px 5px 0; }
.k36 { width: 36px; } .k37 { width: 37px; } .k38 { width: 38px; } .k41 { width: 41px; } .k42 { width: 42px; } .k43 { width: 43px; } .k58 { width: 58px; } .k76 { width: 76px; }
.enter { position: absolute; left: 82px; top: 28px; }
```
